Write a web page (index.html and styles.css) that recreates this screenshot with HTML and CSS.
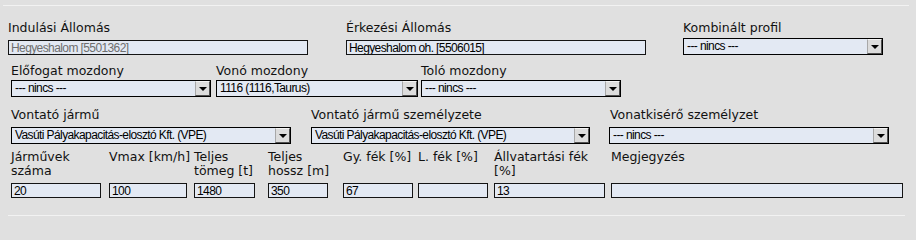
FILE: index.html
```html
<!DOCTYPE html>
<html lang="hu">
<head>
<meta charset="utf-8">
<title>Vonat adatok</title>
<link rel="stylesheet" href="styles.css">
</head>
<body>
<div class="form">
  <div class="rule rule-top"></div>

  <div class="row row1">
    <div class="field c338">
      <div class="label">Indulási Állomás</div>
      <input class="input w300 disabled" type="text" value="Hegyeshalom [5501362]" readonly>
    </div>
    <div class="field c337">
      <div class="label">Érkezési Állomás</div>
      <input class="input w300" type="text" value="Hegyeshalom oh. [5506015]" readonly>
    </div>
    <div class="field">
      <div class="label">Kombinált profil</div>
      <div class="select w200"><span class="val">--- nincs ---</span><span class="btn"><span class="tri"></span></span></div>
    </div>
  </div>

  <div class="row row2">
    <div class="field c205">
      <div class="label">Előfogat mozdony</div>
      <div class="select w200"><span class="val">--- nincs ---</span><span class="btn"><span class="tri"></span></span></div>
    </div>
    <div class="field c205">
      <div class="label">Vonó mozdony</div>
      <div class="select w202"><span class="val">1116 (1116,Taurus)</span><span class="btn"><span class="tri"></span></span></div>
    </div>
    <div class="field">
      <div class="label">Toló mozdony</div>
      <div class="select w200"><span class="val">--- nincs ---</span><span class="btn"><span class="tri"></span></span></div>
    </div>
  </div>

  <div class="row row3">
    <div class="field c300">
      <div class="label">Vontató jármű</div>
      <div class="select w280"><span class="val">Vasúti Pályakapacitás-elosztó Kft. (VPE)</span><span class="btn"><span class="tri"></span></span></div>
    </div>
    <div class="field c299">
      <div class="label">Vontató jármű személyzete</div>
      <div class="select w279"><span class="val">Vasúti Pályakapacitás-elosztó Kft. (VPE)</span><span class="btn"><span class="tri"></span></span></div>
    </div>
    <div class="field">
      <div class="label">Vonatkisérő személyzet</div>
      <div class="select w280 shift-left"><span class="val">--- nincs ---</span><span class="btn"><span class="tri"></span></span></div>
    </div>
  </div>

  <div class="row row4">
    <div class="field c98">
      <div class="label2">Járművek<br>száma</div>
      <input class="input w90" type="text" value="20" readonly>
    </div>
    <div class="field c85">
      <div class="label2">Vmax [km/h]</div>
      <input class="input w78" type="text" value="100" readonly>
    </div>
    <div class="field c74">
      <div class="label2">Teljes<br>tömeg [t]</div>
      <input class="input w61" type="text" value="1480" readonly>
    </div>
    <div class="field c75">
      <div class="label2">Teljes<br>hossz [m]</div>
      <input class="input w60 nudge" type="text" value="350" readonly>
    </div>
    <div class="field c75">
      <div class="label2">Gy. fék [%]</div>
      <input class="input w70 nudge" type="text" value="67" readonly>
    </div>
    <div class="field c76">
      <div class="label2">L. fék [%]</div>
      <input class="input w70 nudge" type="text" value="" readonly>
    </div>
    <div class="field c117">
      <div class="label2">Állvatartási fék<br>[%]</div>
      <input class="input w111" type="text" value="13" readonly>
    </div>
    <div class="field">
      <div class="label2">Megjegyzés</div>
      <input class="input w292 nudge" type="text" value="" readonly>
    </div>
  </div>

  <div class="rule rule-bottom"></div>
</div>
</body>
</html>
```

FILE: styles.css
```css
html, body {
  margin: 0;
  padding: 0;
}

body {
  background: #e0e0e0;
  font-family: "DejaVu Sans", Verdana, sans-serif;
  font-size: 12.5px;
  color: #111;
}

.form {
  width: 916px;
  height: 222px;
  overflow: hidden;
}

.rule {
  height: 1px;
  background: #f2f2f2;
}

.rule-top {
  margin: 5px 0 0 3px;
  width: 906px;
}

.rule-bottom {
  margin: 17px 0 0 8px;
  width: 897px;
}

.row {
  display: flex;
  align-items: flex-start;
}

.field {
  display: flex;
  flex-direction: column;
  align-items: flex-start;
  flex: none;
}

.label {
  height: 15px;
  line-height: 15px;
  white-space: nowrap;
}

.label2 {
  height: 28px;
  line-height: 14px;
  white-space: nowrap;
}

/* rows */
.row1 { margin-top: 14px; padding-left: 8px; }
.row2 { margin-top: 8px; padding-left: 11px; }
.row3 { margin-top: 10px; padding-left: 11px; }
.row4 { margin-top: 6px; padding-left: 11px; }

.row1 .input { margin-top: 5px; }
.row1 .select { margin-top: 3px; }
.row2 .select { margin-top: 2px; }
.row3 .select { margin-top: 5px; }
.row4 .input { margin-top: 5px; }

/* cell widths */
.c338 { width: 338px; }
.c337 { width: 337px; }
.c205 { width: 205px; }
.c300 { width: 300px; }
.c299 { width: 299px; }
.c98 { width: 98px; }
.c85 { width: 85px; }
.c74 { width: 74px; }
.c75 { width: 75px; }
.c76 { width: 76px; }
.c117 { width: 117px; }

/* control widths */
.w300 { width: 300px; }
.w292 { width: 292px; }
.w280 { width: 280px; }
.w279 { width: 279px; }
.w202 { width: 202px; }
.w200 { width: 200px; }
.w111 { width: 111px; }
.w90 { width: 90px; }
.w78 { width: 78px; }
.w70 { width: 70px; }
.w61 { width: 61px; }
.w60 { width: 60px; }

.nudge { margin-left: 1px; }
.shift-left { margin-left: -1px; }

/* inputs */
.input {
  box-sizing: border-box;
  height: 15px;
  margin: 0;
  padding: 0 2px;
  border: 1px solid #141414;
  border-radius: 0;
  background: #e3e9f3;
  font-family: "Liberation Sans", Arial, sans-serif;
  font-size: 12px;
  letter-spacing: -0.6px;
  line-height: 13px;
  color: #000;
  outline: none;
}

.input.disabled {
  color: #6e6e6e;
}

/* select look-alike */
.select {
  box-sizing: border-box;
  height: 17px;
  border: 1px solid #000;
  background: #e3e9f3;
  display: flex;
  align-items: center;
  font-family: "Liberation Sans", Arial, sans-serif;
  font-size: 12px;
  letter-spacing: -0.6px;
  color: #000;
}

.select .val {
  flex: 1;
  padding-left: 3px;
  white-space: nowrap;
  overflow: hidden;
  line-height: 15px;
}

.select .btn {
  box-sizing: border-box;
  flex: none;
  width: 15px;
  height: 15px;
  background: #dcdcdc;
  border-style: solid;
  border-width: 1px;
  border-color: #f4f4f4 #505050 #505050 #a8a8a8;
  display: flex;
  align-items: flex-end;
  justify-content: center;
  padding-bottom: 4px;
}

.select .tri {
  width: 0;
  height: 0;
  border-left: 4px solid transparent;
  border-right: 4px solid transparent;
  border-top: 4px solid #000;
}
```
